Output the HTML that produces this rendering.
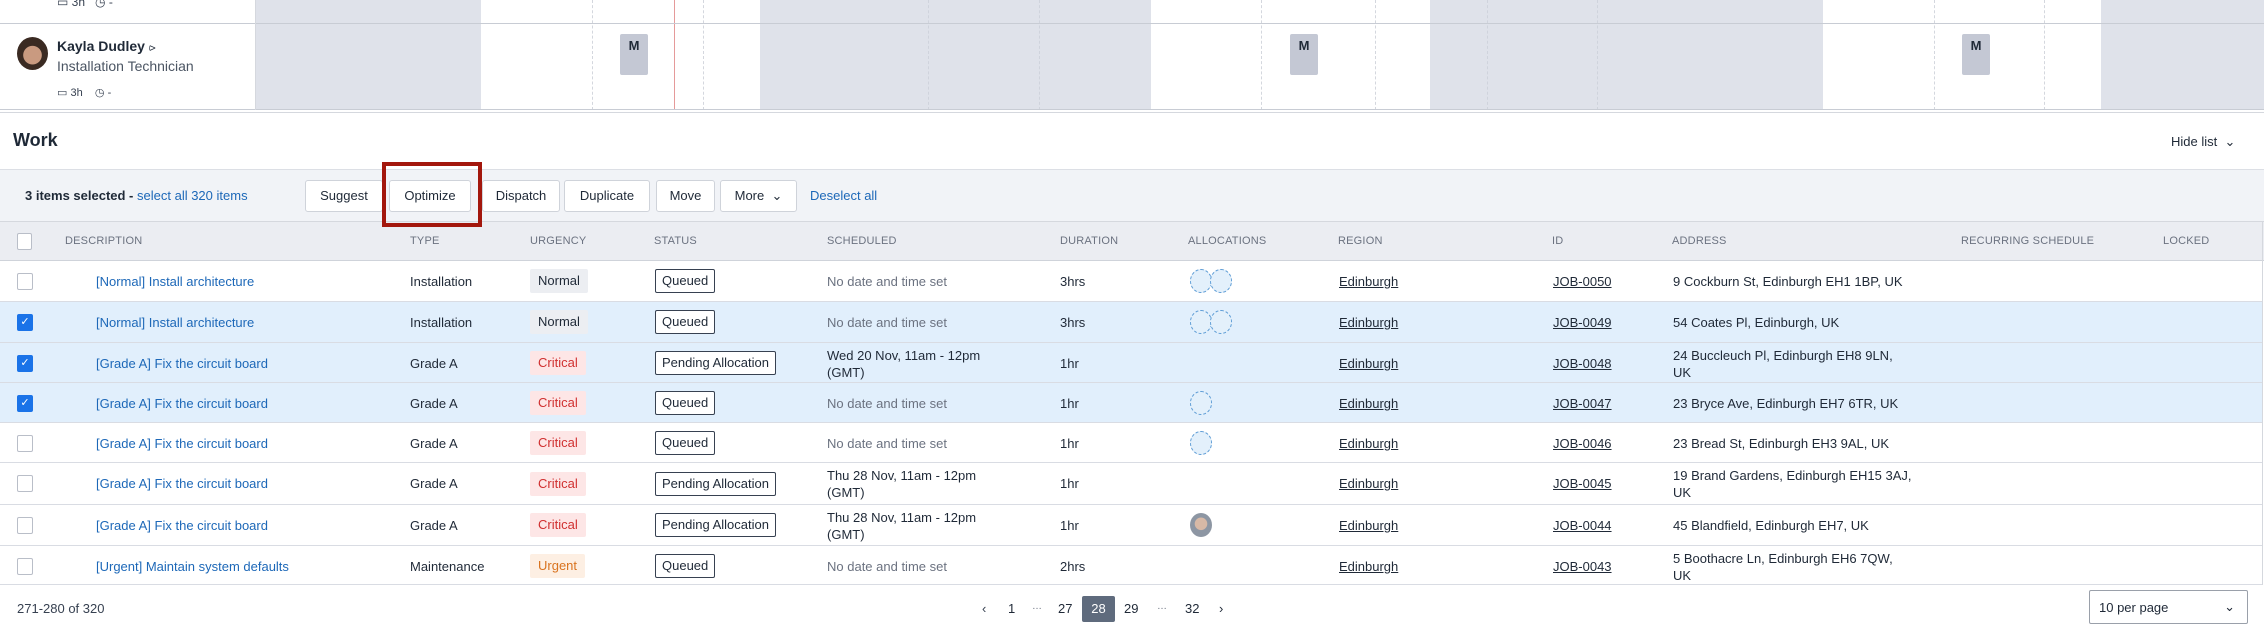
<!DOCTYPE html>
<html><head><meta charset="utf-8"><style>
*{box-sizing:border-box;margin:0;padding:0}
body{width:2264px;height:628px;overflow:hidden;background:#fff;font-family:"Liberation Sans",sans-serif;color:#1f2937;font-size:13px;position:relative}
.a{position:absolute}
.g{position:absolute;top:0;height:110px;background:#dfe2ea}
.dl{position:absolute;top:0;height:110px;border-left:1px dashed #d4d7de}
.m{position:absolute;top:34px;width:28px;height:41px;background:#c4c8d4;border-radius:2px;font-size:13px;font-weight:bold;text-align:center;padding-top:4px;color:#1f2937}
.btn{position:absolute;top:180px;height:32px;border:1px solid #cfd3da;background:#fff;border-radius:3px;font-size:13px;line-height:30px;text-align:center;color:#1f2937}
.hd{position:absolute;top:235px;font-size:11px;color:#6b7280;letter-spacing:.2px}
.row{position:absolute;left:0;width:2262px;border-bottom:1px solid #d9dce3}
.row>*{position:absolute}
.cb{left:17px;width:16px;height:17px;border:1px solid #b9bec8;border-radius:2px;background:#fff}
.cb.on{background:#1a73e8;border-color:#1a73e8;color:#fff;font-size:11px;text-align:center;line-height:15px}
.lnk{color:#1d68b8}
.pill{left:530px;height:24px;padding:0 8px;line-height:24px;border-radius:2px}
.st{left:655px;height:24px;padding:0 6px;line-height:22px;border:1px solid #374151;border-radius:2px;background:#fff}
.u{text-decoration:underline}
.circ{width:22px;height:24px;border:1px dashed #5b9bd5;border-radius:50%;background:#e3f0fb}
.grey{color:#6b7280}
</style></head><body>
<div class="g" style="left:256px;width:225px"></div>
<div class="g" style="left:760px;width:391px"></div>
<div class="g" style="left:1430px;width:393px"></div>
<div class="g" style="left:2101px;width:163px"></div>
<div class="dl" style="left:592px"></div><div class="dl" style="left:703px"></div>
<div class="dl" style="left:928px;border-color:#cfd3dc"></div><div class="dl" style="left:1039px;border-color:#cfd3dc"></div>
<div class="dl" style="left:1261px"></div><div class="dl" style="left:1375px"></div>
<div class="dl" style="left:1487px;border-color:#cfd3dc"></div><div class="dl" style="left:1597px;border-color:#cfd3dc"></div>
<div class="dl" style="left:1934px"></div><div class="dl" style="left:2044px"></div>
<div class="a" style="left:674px;top:0;width:1px;height:110px;background:#e59a9a"></div>
<div class="a" style="left:0;top:23px;width:2264px;height:1px;background:#c8ccd4"></div>
<div class="a" style="left:0;top:109px;width:2264px;height:1px;background:#c8ccd4"></div>
<div class="a" style="left:0;top:112px;width:2264px;height:1px;background:#d5d8de"></div>
<div class="a" style="left:255px;top:0;width:1px;height:110px;background:#d5d8de"></div>
<div class="m" style="left:620px">M</div><div class="m" style="left:1290px">M</div><div class="m" style="left:1962px">M</div>
<div class="a" style="left:57px;top:-5px;font-size:12px;color:#374151">▭ 3h &nbsp; ◷ -</div>
<div class="a" style="left:17px;top:37px;width:31px;height:33px;border-radius:50%;background:radial-gradient(circle at 50% 55%,#c99a80 0 38%,#3a2a22 40%)"></div>
<div class="a" style="left:57px;top:38px;font-size:14px;font-weight:bold;color:#1f2937">Kayla Dudley <span style="font-weight:normal;font-size:12px">⪧</span></div>
<div class="a" style="left:57px;top:58px;font-size:14px;color:#4b5563">Installation Technician</div>
<div class="a" style="left:57px;top:86px;font-size:11px;color:#374151">▭ 3h &nbsp;&nbsp; ◷ -</div>
<div class="a" style="left:13px;top:130px;font-size:18px;font-weight:bold;color:#1f2937">Work</div>
<div class="a" style="left:2171px;top:134px;font-size:13px">Hide list &nbsp;⌄</div>
<div class="a" style="left:0;top:169px;width:2264px;height:53px;background:#f1f3f7;border-top:1px solid #dcdfe5;border-bottom:1px solid #d5d8de"></div>
<div class="a" style="left:25px;top:188px;font-size:13px"><b>3 items selected -</b> <span class="lnk">select all 320 items</span></div>
<div class="btn" style="left:305px;width:78px">Suggest</div>
<div class="btn" style="left:389px;width:82px">Optimize</div>
<div class="btn" style="left:482px;width:78px">Dispatch</div>
<div class="btn" style="left:564px;width:86px">Duplicate</div>
<div class="btn" style="left:656px;width:59px">Move</div>
<div class="btn" style="left:720px;width:77px">More &nbsp;⌄</div>
<div class="a lnk" style="left:810px;top:188px">Deselect all</div>
<div class="a" style="left:0;top:222px;width:2264px;height:39px;background:#ebedf2;border-bottom:1px solid #cfd3da"></div>
<div class="a cb" style="left:17px;top:233px;width:15px"></div>
<div class="hd" style="left:65px">DESCRIPTION</div><div class="hd" style="left:410px">TYPE</div><div class="hd" style="left:530px">URGENCY</div><div class="hd" style="left:654px">STATUS</div><div class="hd" style="left:827px">SCHEDULED</div><div class="hd" style="left:1060px">DURATION</div><div class="hd" style="left:1188px">ALLOCATIONS</div><div class="hd" style="left:1338px">REGION</div><div class="hd" style="left:1552px">ID</div><div class="hd" style="left:1672px">ADDRESS</div><div class="hd" style="left:1961px">RECURRING SCHEDULE</div><div class="hd" style="left:2163px">LOCKED</div>
<div class="a" style="left:2262px;top:222px;width:1px;height:363px;background:#d5d8de"></div>

<div class="row" style="top:261px;height:41px"><div class="cb" style="top:12px"></div><div class="lnk" style="left:96px;top:13px">[Normal] Install architecture</div><div style="left:410px;top:13px">Installation</div><div class="pill" style="top:8px;background:#eceef2">Normal</div><div class="st" style="top:8px">Queued</div><div class="grey" style="left:827px;top:13px">No date and time set</div><div style="left:1060px;top:13px">3hrs</div><div class="circ" style="left:1190px;top:8px"></div><div class="circ" style="left:1210px;top:8px"></div><div class="u" style="left:1339px;top:13px">Edinburgh</div><div class="u" style="left:1553px;top:13px">JOB-0050</div><div style="left:1673px;top:13px">9 Cockburn St, Edinburgh EH1 1BP, UK</div></div>

<div class="row" style="top:302px;height:41px;background:#e1effc"><div class="cb on" style="top:12px">✓</div><div class="lnk" style="left:96px;top:13px">[Normal] Install architecture</div><div style="left:410px;top:13px">Installation</div><div class="pill" style="top:8px;background:#eceef2">Normal</div><div class="st" style="top:8px">Queued</div><div class="grey" style="left:827px;top:13px">No date and time set</div><div style="left:1060px;top:13px">3hrs</div><div class="circ" style="left:1190px;top:8px"></div><div class="circ" style="left:1210px;top:8px"></div><div class="u" style="left:1339px;top:13px">Edinburgh</div><div class="u" style="left:1553px;top:13px">JOB-0049</div><div style="left:1673px;top:13px">54 Coates Pl, Edinburgh, UK</div></div>

<div class="row" style="top:343px;height:40px;background:#e1effc"><div class="cb on" style="top:12px">✓</div><div class="lnk" style="left:96px;top:13px">[Grade A] Fix the circuit board</div><div style="left:410px;top:13px">Grade A</div><div class="pill" style="top:8px;background:#fde6e6;color:#d03030">Critical</div><div class="st" style="top:8px">Pending Allocation</div><div style="left:827px;top:4px;line-height:17px">Wed 20 Nov, 11am - 12pm<br>(GMT)</div><div style="left:1060px;top:13px">1hr</div><div class="u" style="left:1339px;top:13px">Edinburgh</div><div class="u" style="left:1553px;top:13px">JOB-0048</div><div style="left:1673px;top:4px;line-height:17px">24 Buccleuch Pl, Edinburgh EH8 9LN,<br>UK</div></div>

<div class="row" style="top:383px;height:40px;background:#e1effc"><div class="cb on" style="top:12px">✓</div><div class="lnk" style="left:96px;top:13px">[Grade A] Fix the circuit board</div><div style="left:410px;top:13px">Grade A</div><div class="pill" style="top:8px;background:#fde6e6;color:#d03030">Critical</div><div class="st" style="top:8px">Queued</div><div class="grey" style="left:827px;top:13px">No date and time set</div><div style="left:1060px;top:13px">1hr</div><div class="circ" style="left:1190px;top:8px"></div><div class="u" style="left:1339px;top:13px">Edinburgh</div><div class="u" style="left:1553px;top:13px">JOB-0047</div><div style="left:1673px;top:13px">23 Bryce Ave, Edinburgh EH7 6TR, UK</div></div>

<div class="row" style="top:423px;height:40px"><div class="cb" style="top:12px"></div><div class="lnk" style="left:96px;top:13px">[Grade A] Fix the circuit board</div><div style="left:410px;top:13px">Grade A</div><div class="pill" style="top:8px;background:#fde6e6;color:#d03030">Critical</div><div class="st" style="top:8px">Queued</div><div class="grey" style="left:827px;top:13px">No date and time set</div><div style="left:1060px;top:13px">1hr</div><div class="circ" style="left:1190px;top:8px"></div><div class="u" style="left:1339px;top:13px">Edinburgh</div><div class="u" style="left:1553px;top:13px">JOB-0046</div><div style="left:1673px;top:13px">23 Bread St, Edinburgh EH3 9AL, UK</div></div>

<div class="row" style="top:463px;height:42px"><div class="cb" style="top:12px"></div><div class="lnk" style="left:96px;top:13px">[Grade A] Fix the circuit board</div><div style="left:410px;top:13px">Grade A</div><div class="pill" style="top:9px;background:#fde6e6;color:#d03030">Critical</div><div class="st" style="top:9px">Pending Allocation</div><div style="left:827px;top:4px;line-height:17px">Thu 28 Nov, 11am - 12pm<br>(GMT)</div><div style="left:1060px;top:13px">1hr</div><div class="u" style="left:1339px;top:13px">Edinburgh</div><div class="u" style="left:1553px;top:13px">JOB-0045</div><div style="left:1673px;top:4px;line-height:17px">19 Brand Gardens, Edinburgh EH15 3AJ,<br>UK</div></div>

<div class="row" style="top:505px;height:41px"><div class="cb" style="top:12px"></div><div class="lnk" style="left:96px;top:13px">[Grade A] Fix the circuit board</div><div style="left:410px;top:13px">Grade A</div><div class="pill" style="top:8px;background:#fde6e6;color:#d03030">Critical</div><div class="st" style="top:8px">Pending Allocation</div><div style="left:827px;top:4px;line-height:17px">Thu 28 Nov, 11am - 12pm<br>(GMT)</div><div style="left:1060px;top:13px">1hr</div><div style="left:1190px;top:8px;width:22px;height:24px;border-radius:50%;background:radial-gradient(circle at 50% 45%,#d8b9a6 0 35%,#8d96a3 38%)"></div><div class="u" style="left:1339px;top:13px">Edinburgh</div><div class="u" style="left:1553px;top:13px">JOB-0044</div><div style="left:1673px;top:13px">45 Blandfield, Edinburgh EH7, UK</div></div>

<div class="row" style="top:546px;height:39px"><div class="cb" style="top:12px"></div><div class="lnk" style="left:96px;top:13px">[Urgent] Maintain system defaults</div><div style="left:410px;top:13px">Maintenance</div><div class="pill" style="top:8px;background:#fdefe3;color:#d9731f">Urgent</div><div class="st" style="top:8px">Queued</div><div class="grey" style="left:827px;top:13px">No date and time set</div><div style="left:1060px;top:13px">2hrs</div><div class="u" style="left:1339px;top:13px">Edinburgh</div><div class="u" style="left:1553px;top:13px">JOB-0043</div><div style="left:1673px;top:4px;line-height:17px">5 Boothacre Ln, Edinburgh EH6 7QW,<br>UK</div></div>

<div class="a" style="left:17px;top:601px;color:#374151">271-280 of 320</div>
<div class="a" style="left:982px;top:601px;color:#374151">‹</div>
<div class="a" style="left:1008px;top:601px">1</div>
<div class="a grey" style="left:1032px;top:601px;font-size:10px">…</div>
<div class="a" style="left:1058px;top:601px">27</div>
<div class="a" style="left:1082px;top:596px;width:33px;height:26px;background:#5f6b7d;color:#fff;text-align:center;line-height:26px;border-radius:2px">28</div>
<div class="a" style="left:1124px;top:601px">29</div>
<div class="a grey" style="left:1157px;top:601px;font-size:10px">…</div>
<div class="a" style="left:1185px;top:601px">32</div>
<div class="a" style="left:1219px;top:601px">›</div>
<div class="a" style="left:2089px;top:590px;width:159px;height:34px;border:1px solid #9aa0aa;border-radius:2px;padding:9px 9px;font-size:13px">10 per page<span style="position:absolute;right:12px;top:8px">⌄</span></div>
<div class="a" style="left:382px;top:162px;width:100px;height:65px;border:4px solid #a3170d"></div>
</body></html>
